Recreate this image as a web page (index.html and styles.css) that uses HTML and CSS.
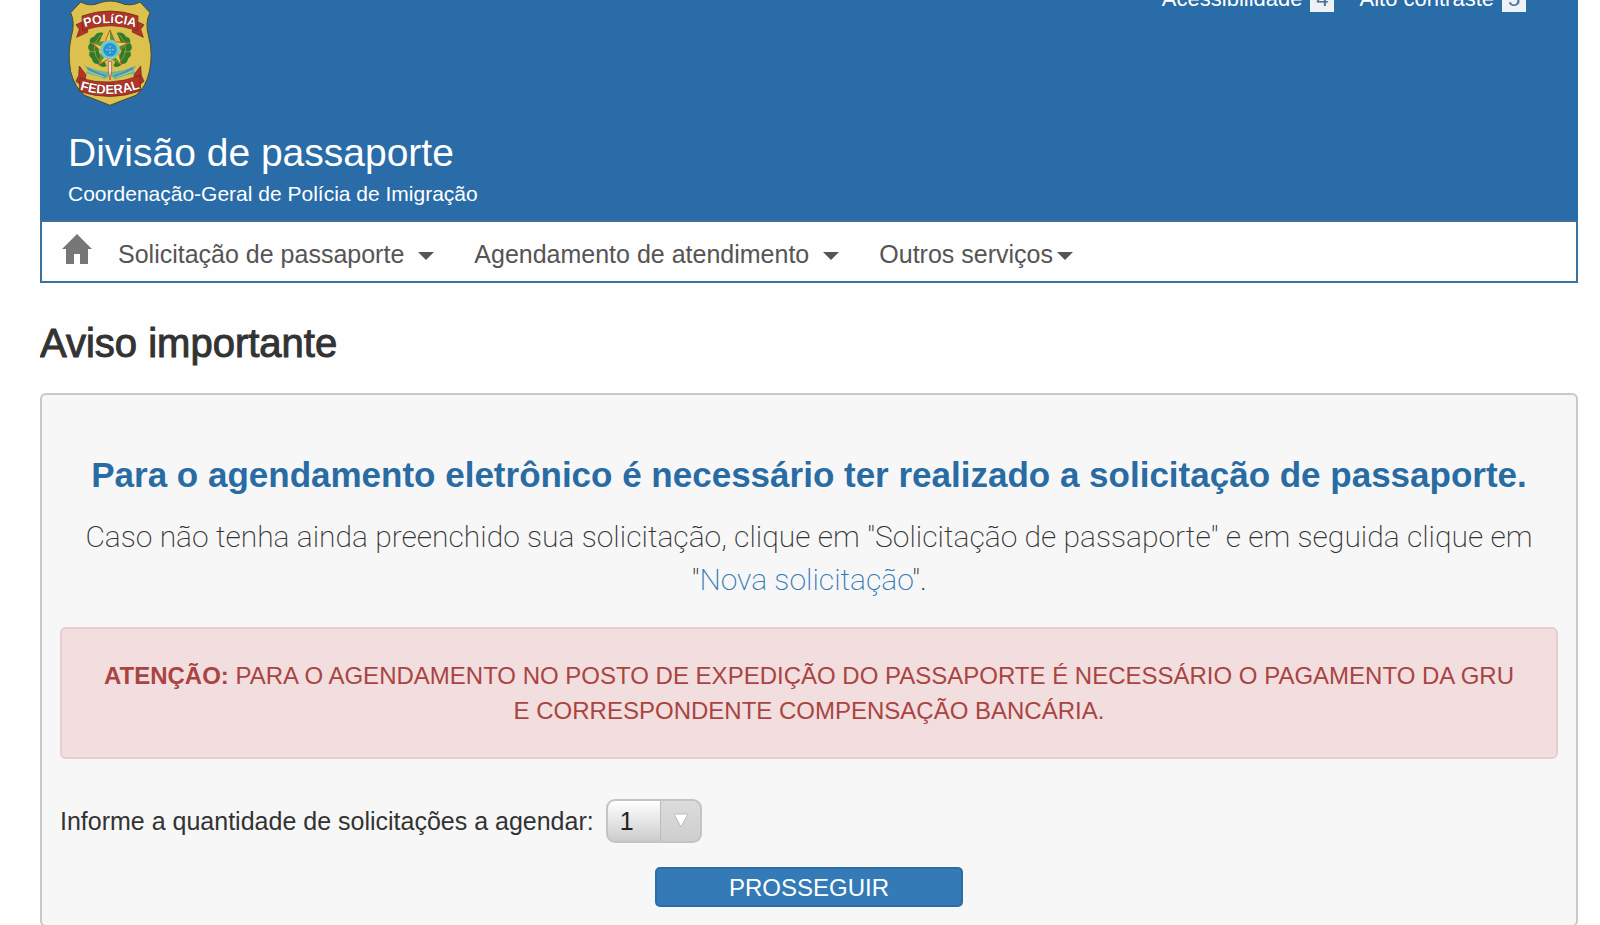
FILE: index.html
```
<!DOCTYPE html>
<html lang="pt-BR">
<head>
	<meta charset="UTF-8">
	<meta name="viewport" content="width=device-width, initial-scale=1.0">
	<title>Divisão de passaporte</title>
	<link rel="stylesheet" href="styles.css">
</head>
<body>

	<header class="header">
		<div class="brand">
			<svg class="logo" viewBox="84 0 252 318" role="img" aria-label="Polícia Federal">
				<path d="M92 38 L122 6 Q150 22 180 8 Q196 3 210 3 Q226 3 240 8 Q270 22 300 6 L330 38 Q314 68 326 110 Q340 160 328 215 Q318 262 288 286 Q250 300 210 316 Q170 300 134 286 Q104 262 92 215 Q82 160 94 110 Q106 68 92 38Z" fill="#dcc14e" stroke="#4b4a2c" stroke-width="3"/>
				<g fill="#2f7d2c">
					<path d="M190 98 Q170 94 162 110 Q146 112 150 130 Q138 142 150 154 Q142 168 156 176 Q158 192 174 192 Q184 206 200 198 L192 180 Q170 160 176 130Z"/>
					<path d="M230 98 Q250 94 258 110 Q274 112 270 130 Q282 142 270 154 Q278 168 264 176 Q262 192 246 192 Q236 206 220 198 L228 180 Q250 160 244 130Z"/>
				</g>
				<g fill="none" stroke="#c9a233" stroke-width="2">
					<path d="M182 104 Q144 146 182 190M238 104 Q276 146 238 190"/>
					<path d="M152 128 L170 138M146 154 L168 156M268 128 L250 138M274 154 L252 156"/>
				</g>
				<path d="M132 196 Q166 214 210 216 Q254 214 288 196 L280 212 L288 220 Q250 226 226 238 L210 226 L194 238 Q170 226 138 220 L144 210Z" fill="#67b6a0"/>
				<path d="M142 204 Q174 224 198 228M278 204 Q246 224 222 228" fill="none" stroke="#3f8fb8" stroke-width="5"/>
				<path d="M142 213 L190 231M278 213 L230 231" fill="none" stroke="#d8d66a" stroke-width="2"/>
				<path d="M205 184 H215 V212 L210 240 L205 212Z" fill="#e8e3c4" stroke="#b53b2c" stroke-width="2"/>
				<path d="M210 90 L225 125 L263 129 L235 155 L244 194 L210 174 L176 194 L185 155 L157 129 L195 125Z" fill="#f0cf3a" stroke="#c8542c" stroke-width="3"/>
				<path d="M210 90 V150 L225 125ZM263 129 L210 150 L235 155ZM244 194 L210 150 V174ZM176 194 L210 150 L185 155ZM157 129 L210 150 L195 125Z" fill="#4d9540"/>
				<circle cx="210" cy="149" r="29" fill="#58c4d4" stroke="#d2cf68" stroke-width="2"/>
				<circle cx="210" cy="149" r="20" fill="#2b93cf"/>
				<circle cx="210" cy="149" r="24" fill="none" stroke="#a5e2df" stroke-width="3" stroke-dasharray="3 4"/>
				<g fill="#d4f0f4">
					<circle cx="210" cy="140" r="2"/>
					<circle cx="210" cy="158" r="2"/>
					<circle cx="201" cy="149" r="2"/>
					<circle cx="219" cy="149" r="2"/>
					<circle cx="210" cy="150" r="2"/>
				</g>
				<g fill="#b93227" stroke="#5c2a1c" stroke-width="2">
					<path d="M126 66 L108 74 L118 88 L110 112 L144 96 L138 80Z"/>
					<path d="M294 66 L312 74 L302 88 L310 112 L276 96 L282 80Z"/>
					<path d="M126 48 Q210 18 294 48 L292 92 Q210 62 128 92Z"/>
					<path d="M118 198 L138 224 L132 262 L108 244 L116 226Z"/>
					<path d="M302 198 L282 224 L288 262 L312 244 L304 226Z"/>
					<path d="M120 234 Q210 262 300 226 L302 272 Q210 306 118 274Z"/>
				</g>
				<path id="arcTop" d="M128 84 Q210 54 292 84" fill="none"/>
				<path id="arcBottom" d="M116 268 Q210 298 304 264" fill="none"/>
				<text class="logo-text"><textPath href="#arcTop" startOffset="50%">POLíCIA</textPath></text>
				<text class="logo-text logo-text-big"><textPath href="#arcBottom" startOffset="50%">FEDERAL</textPath></text>
			</svg>
			<p class="brand-title">Divisão de passaporte</p>
			<p class="brand-subtitle">Coordenação-Geral de Polícia de Imigração</p>
		</div>
		<div class="access">
			<a href="#">Acessibilidade <span class="key">4</span></a>
			<a href="#">Alto contraste <span class="key">5</span></a>
		</div>
	</header>

	<nav class="menu">
		<a class="home" href="#" aria-label="Início">
			<svg viewBox="0 0 30 30" width="30" height="30"><path d="M15 0 L30 15 H26 V30 H18 V20 H12 V30 H4 V15 H0Z" fill="#777"/></svg>
		</a>
		<a href="#">Solicitação de passaporte <span class="caret"></span></a>
		<a href="#">Agendamento de atendimento <span class="caret"></span></a>
		<a href="#">Outros serviços<span class="caret caret-close"></span></a>
	</nav>

	<main>
		<h1>Aviso importante</h1>

		<form class="panel">
			<h2>Para o agendamento eletrônico é necessário ter realizado a solicitação de passaporte.</h2>
			<p class="lead">Caso não tenha ainda preenchido sua solicitação, clique em "Solicitação de passaporte" e em seguida clique em "<a href="#">Nova solicitação</a>".</p>

			<div class="alert">
				<strong>ATENÇÃO:</strong> PARA O AGENDAMENTO NO POSTO DE EXPEDIÇÃO DO PASSAPORTE É NECESSÁRIO O PAGAMENTO DA GRU E CORRESPONDENTE COMPENSAÇÃO BANCÁRIA.
			</div>

			<div class="field">
				<label for="quantidade">Informe a quantidade de solicitações a agendar:</label>
				<div class="select">
					<select id="quantidade" name="quantidade">
						<option>1</option>
						<option>2</option>
						<option>3</option>
						<option>4</option>
						<option>5</option>
					</select>
					<svg class="select-arrow" viewBox="0 0 14 14" width="14" height="14"><path d="M0 1 H14 L7 14Z" fill="#fff" stroke="#bbb" stroke-width="1"/></svg>
				</div>
			</div>

			<button type="submit">PROSSEGUIR</button>
		</form>
	</main>

</body>
</html>
```

FILE: styles.css
```
* {
	box-sizing: border-box;
}
html {
	overflow: hidden;
}
body {
	margin: 0 22px 0 40px;
	background: #fefefe;
	color: #333;
	font-family: "Liberation Sans", Arial, sans-serif;
	font-size: 25px;
	line-height: 35px;
}
a {
	text-decoration: none;
}
.header {
	display: flex;
	justify-content: space-between;
	align-items: flex-start;
	padding: 0 52px 10px 28px;
	background: #296ca8;
	color: #fff;
}
.logo {
	display: block;
	width: 84px;
	height: 106px;
}
.logo-text {
	fill: #fff;
	stroke: #5c1a14;
	stroke-width: 2px;
	paint-order: stroke;
	font-size: 38px;
	font-weight: bold;
	text-anchor: middle;
}
.logo-text-big {
	font-size: 39px;
}
.brand-title {
	margin: 23px 0 0;
	font-size: 39px;
	line-height: 48px;
}
.brand-subtitle {
	margin: 0;
	font-size: 21px;
	line-height: 33px;
}
.access {
	display: flex;
	gap: 25px;
	margin-top: -17px;
	font-size: 22px;
	line-height: 32px;
}
.access a {
	display: flex;
	align-items: center;
	gap: 8px;
	color: #fff;
}
.key {
	width: 24px;
	background: #eef2f6;
	color: #4b6f96;
	line-height: 26px;
	text-align: center;
}
.menu {
	display: flex;
	align-items: center;
	gap: 40px;
	padding: 12px 20px 7px;
	border: 2px solid #3c719c;
}
.menu a {
	display: flex;
	align-items: center;
	gap: 14px;
	color: #555;
}
.menu .home {
	margin: 0 -14px 10px 0;
}
.caret {
	margin-top: 4px;
	border: 8px solid transparent;
	border-top-color: #555;
	border-bottom: 0;
}
.caret-close {
	margin-left: -10px;
}
h1 {
	margin: 36px 0 26px;
	font-size: 40px;
	font-weight: normal;
	line-height: 48px;
	-webkit-text-stroke: 1px #333;
}
.panel {
	padding: 56px 18px 18px;
	border: 2px solid #c8c8c8;
	border-radius: 6px;
	background: #f7f7f7;
}
h2 {
	margin: 0 0 16px;
	color: #296ca3;
	font-size: 35px;
	line-height: 48px;
	text-align: center;
}
.lead {
	margin: 0 0 26px;
	font-family: Roboto, "Liberation Sans", sans-serif;
	font-size: 30px;
	font-weight: 200;
	line-height: 43px;
	text-align: center;
}
.lead a {
	color: #337ab7;
}
.alert {
	padding: 29px 36px;
	border: 2px solid #e8ccd1;
	border-radius: 6px;
	background: #f2dede;
	color: #a94442;
	font-size: 24px;
	text-align: center;
}
.field {
	display: flex;
	align-items: center;
	gap: 12px;
	margin: 40px 0 24px;
}
.select {
	position: relative;
}
select {
	display: block;
	width: 96px;
	height: 44px;
	padding: 0 12px;
	appearance: none;
	border: 2px solid #c4c4c4;
	border-radius: 9px;
	background:
		linear-gradient(#dcdcdc, #cecece) right / 39px 100% no-repeat,
		linear-gradient(90deg, #bbb, #bbb) right 39px top / 1px 100% no-repeat,
		linear-gradient(#fff, #ccc);
	color: #222;
	font: inherit;
}
.select-arrow {
	position: absolute;
	top: 14px;
	right: 14px;
	pointer-events: none;
}
button {
	display: block;
	width: 308px;
	height: 40px;
	margin: 0 auto;
	border: 2px solid #2e6da4;
	border-radius: 5px;
	background: #337ab7;
	color: #fff;
	font-family: inherit;
	font-size: 24px;
	line-height: 36px;
	cursor: pointer;
}
@media (max-width: 900px) {
	.menu {
		flex-wrap: wrap;
		gap: 20px;
	}
}
```
